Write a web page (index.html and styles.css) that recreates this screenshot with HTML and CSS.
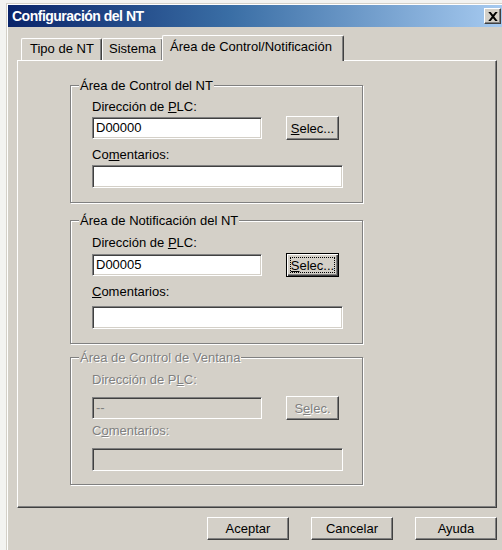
FILE: index.html
```html
<!DOCTYPE html>
<html lang="es">
<head>
<meta charset="utf-8">
<title>Configuración del NT</title>
<link rel="stylesheet" href="styles.css">
</head>
<body>
<div class="window">
  <div class="titlebar">
    <span class="title">Configuración del NT</span>
    <span class="close-btn">
      <svg width="10" height="9" viewBox="0 0 10 9"><path d="M0.3 0h2.4l2.3 2.8L7.3 0h2.4L6.2 4.5 9.7 9H7.3L5 6.2 2.7 9H0.3l3.5-4.5z" fill="#000"/></svg>
    </span>
  </div>

  <div class="content">
    <div class="tabstrip">
      <span class="tab first">Tipo de NT</span>
      <span class="tab second">Sistema</span>
      <span class="tab active">Área de Control/Notificación</span>
    </div>

    <div class="panel">
      <fieldset class="group control">
        <legend>Área de Control del NT</legend>
        <div class="group-body">
          <div class="label">Dirección de <u>P</u>LC:</div>
          <div class="row">
            <span class="field short">D00000</span>
            <span class="btn small"><u>S</u>elec...</span>
          </div>
          <div class="label comment">Co<u>m</u>entarios:</div>
          <span class="field long"></span>
        </div>
      </fieldset>

      <fieldset class="group notify">
        <legend>Área de Notificación del NT</legend>
        <div class="group-body">
          <div class="label">Dirección de <u>P</u>LC:</div>
          <div class="row">
            <span class="field short">D00005</span>
            <span class="btn small default"><span class="focus"><u>S</u>elec...</span></span>
          </div>
          <div class="label comment"><u>C</u>omentarios:</div>
          <span class="field long"></span>
        </div>
      </fieldset>

      <fieldset class="group window-area disabled">
        <legend>Área de Control de Ventana</legend>
        <div class="group-body">
          <div class="label">Dirección de P<u>L</u>C:</div>
          <div class="row">
            <span class="field short">--</span>
            <span class="btn small">S<u>e</u>lec.</span>
          </div>
          <div class="label comment">C<u>o</u>mentarios:</div>
          <span class="field long"></span>
        </div>
      </fieldset>
    </div>

    <div class="actions">
      <span class="btn">Aceptar</span>
      <span class="btn">Cancelar</span>
      <span class="btn">Ayuda</span>
    </div>
  </div>
</div>
</body>
</html>
```

FILE: styles.css
```css
* {
  box-sizing: border-box;
}

html, body {
  margin: 0;
  height: 100%;
  overflow: hidden;
}

body {
  background: #f3f3f1;
  font-family: "Liberation Sans", Arial, sans-serif;
  font-size: 13px;
  color: #000;
}

/* dialog frame */
.window {
  margin: 3px 0 0 6px;
  width: 496px;
  height: 547px;
  background: #d4d0c8;
  border-top: 1px solid #d4d0c8;
  border-left: 1px solid #d4d0c8;
  box-shadow: inset 1px 1px 0 #ffffff;
  padding: 1px 0 0 1px;
}

.titlebar {
  height: 22px;
  display: flex;
  align-items: center;
  justify-content: space-between;
  padding: 0 1px 0 4px;
  background: linear-gradient(to right, #0a246a 0%, #3a6ea5 45%, #a6caf0 100%);
}

.title {
  color: #fff;
  font-weight: bold;
  font-size: 14px;
  letter-spacing: -0.5px;
}

.close-btn {
  width: 17px;
  height: 16px;
  display: flex;
  align-items: center;
  justify-content: center;
  background: #d4d0c8;
  border-top: 1px solid #fff;
  border-left: 1px solid #fff;
  border-right: 1px solid #404040;
  border-bottom: 1px solid #404040;
  box-shadow: inset -1px -1px 0 #808080;
}

.content {
  padding: 7px 0 0 9px;
}

/* tabs */
.tabstrip {
  display: flex;
  align-items: flex-end;
  height: 26px;
  padding-left: 4px;
}

.tab {
  height: 22px;
  line-height: 20px;
  padding: 0 7px 0 8px;
  border-top: 1px solid #fff;
  border-left: 1px solid #fff;
  border-right: 1px solid #404040;
  border-radius: 2px 2px 0 0;
  box-shadow: inset -1px 0 0 #808080;
  background: #d4d0c8;
}

.tab.first {
  width: 81px;
}

.tab.second {
  width: 61px;
  padding-left: 6px;
}

.tab.active {
  position: relative;
  z-index: 1;
  width: 182px;
  height: 26px;
  margin: 0 -1px -1px -1px;
  padding: 0 6px 0 7px;
  line-height: 22px;
}

/* tab page */
.panel {
  width: 480px;
  height: 448px;
  border-top: 1px solid #fff;
  border-left: 1px solid #fff;
  border-right: 1px solid #404040;
  border-bottom: 1px solid #404040;
  box-shadow: inset -1px -1px 0 #808080;
  padding: 17px 0 0 52px;
  display: flex;
  flex-direction: column;
}

/* group boxes */
.group {
  margin: 0;
  width: 293px;
  min-width: 0;
  padding: 0 0 14px 0;
  border: 1px solid #808080;
  box-shadow: inset 1px 1px 0 #fff, 1px 1px 0 #fff;
}

.group legend {
  margin-left: 8px;
  padding: 0 1px;
  line-height: 15px;
  background: #d4d0c8;
}

.group-body {
  padding-left: 21px;
}

.label {
  line-height: 15px;
  margin-top: 6px;
}

.row {
  display: flex;
  align-items: center;
  margin-top: 2px;
}

.label.comment {
  margin-top: 7px;
}

.field {
  display: block;
  height: 22px;
  padding: 2px 0 0 3px;
  line-height: 16px;
  background: #fff;
  border-top: 1px solid #808080;
  border-left: 1px solid #808080;
  border-right: 1px solid #fff;
  border-bottom: 1px solid #fff;
  box-shadow: inset 1px 1px 0 #404040, inset -1px -1px 0 #d4d0c8;
}

.field.short {
  width: 170px;
}

.field.long {
  width: 251px;
  height: 23px;
  margin-top: 3px;
}

/* the lower groups are spaced a little looser */
.group.notify {
  margin-top: 10px;
}

.notify .label {
  margin-top: 7px;
}

.notify .row {
  margin-top: 3px;
}

.notify .label.comment {
  margin-top: 7px;
}

.notify .field.long {
  margin-top: 7px;
}

.group.window-area {
  margin-top: 6px;
  padding-bottom: 13px;
}

.window-area .label {
  margin-top: 7px;
}

.window-area .row {
  margin-top: 9px;
}

.window-area .label.comment {
  margin-top: 3px;
}

.window-area .field.long {
  margin-top: 10px;
}

/* push buttons */
.btn {
  display: flex;
  align-items: center;
  justify-content: center;
  width: 82px;
  height: 23px;
  background: #d4d0c8;
  border-top: 1px solid #fff;
  border-left: 1px solid #fff;
  border-right: 1px solid #404040;
  border-bottom: 1px solid #404040;
  box-shadow: inset -1px -1px 0 #808080;
}

.btn.small {
  width: 53px;
  height: 24px;
  margin-left: 24px;
}

.btn.default {
  border: 1px solid #000;
  box-shadow: inset 1px 1px 0 #fff, inset -1px -1px 0 #404040, inset -2px -2px 0 #808080;
}

.focus {
  display: flex;
  align-items: center;
  justify-content: center;
  width: 45px;
  height: 16px;
  border: 1px dotted #000;
}

/* disabled group */
.disabled legend,
.disabled .label,
.disabled .btn {
  color: #808080;
  text-shadow: 1px 1px 0 #fff;
}

.disabled .field {
  background: #d4d0c8;
  color: #808080;
}

.actions {
  display: flex;
  justify-content: flex-end;
  gap: 22px;
  width: 480px;
  margin-top: 9px;
}
```
